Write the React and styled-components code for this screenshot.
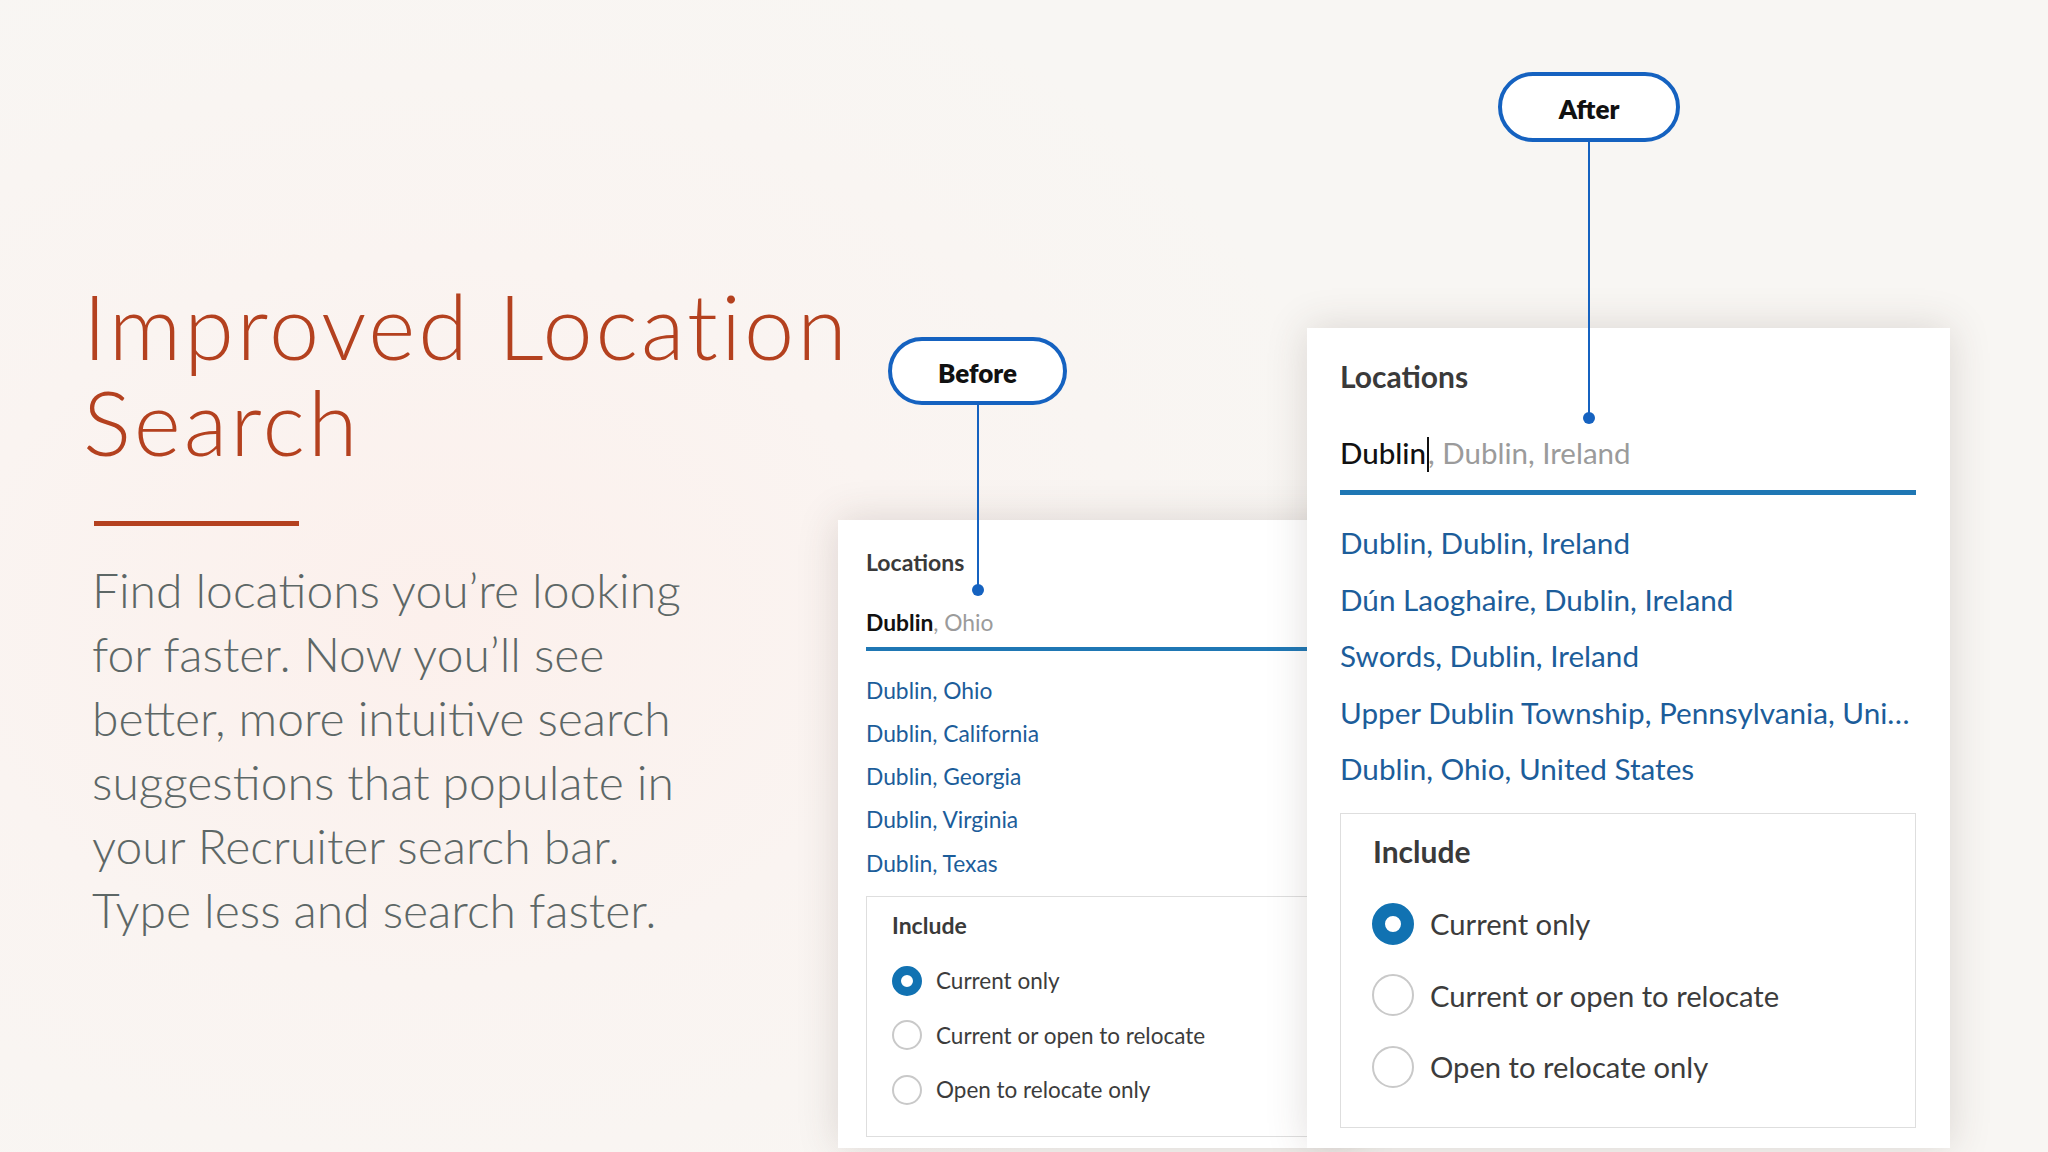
import React from 'react';
import styled, { createGlobalStyle, ThemeProvider } from 'styled-components';

const Global = createGlobalStyle`
  html, body { margin: 0; padding: 0; }
  body { width: 2048px; height: 1152px; overflow: hidden; background: #f8f6f3; }
  #root { width: 100%; height: 100%; }
`;

const large = {
  pad: '30px 34px 0 33px',
  label: 30, labelLh: 36,
  input: 29.5, inputLh: 44, inputGap: 37, inputPb: 15, line: 5,
  item: 29.7, itemLh: 56.5, listTop: 20,
  boxTop: 15, boxPad: '19px 20px 24px 31px', incLabelPl: 1, incLh: 36, rowsTop: 19.5,
  row: 71.5, radio: 42, ring: 13, radioGap: 16, rowFont: 29.2,
};
const small = {
  pad: '28px 0 0 28px',
  label: 23, labelLh: 28,
  input: 22.8, inputLh: 34, inputGap: 29, inputPb: 8, line: 4,
  item: 22.8, itemLh: 43.3, listTop: 17.5,
  boxTop: 11.5, boxPad: '14px 20px 19px 25px', incLabelPl: 0, incLh: 28, rowsTop: 14,
  row: 54.5, radio: 30, ring: 9, radioGap: 14, rowFont: 22.5,
};

const Slide = styled.main`
  position: relative;
  width: 2048px;
  height: 1152px;
  overflow: hidden;
  display: flex;
  background: radial-gradient(ellipse 950px 720px at 430px 620px, #fcf0ec 0%, #faf4f1 50%, #f8f6f3 100%);
  font-family: Lato, "Noto Sans", sans-serif;
`;

const Intro = styled.section`
  flex: none;
  width: 838px;
  box-sizing: border-box;
  padding: 277px 0 0 83px;
`;

const Title = styled.h1`
  margin: 0;
  font-family: Lato, sans-serif;
  font-weight: 300;
  font-size: 90px;
  line-height: 96px;
  letter-spacing: 3px;
  white-space: nowrap;
  color: #b4411f;
`;

const Rule = styled.div`
  width: 205px;
  height: 5px;
  margin: 52px 0 0 11px;
  background: #b4411f;
`;

const Lead = styled.p`
  margin: 32px 0 0 9px;
  font-family: Lato, sans-serif;
  font-weight: 300;
  font-size: 48px;
  line-height: 64px;
  white-space: nowrap;
  color: #5d6766;
`;

const Stage = styled.section`
  flex: 1;
  display: flex;
  align-items: flex-end;
  padding-bottom: 4px;
  box-sizing: border-box;
`;

const Panel = styled.div`
  position: relative;
  flex: none;
  box-sizing: border-box;
  width: ${p => p.$w}px;
  height: ${p => p.$h}px;
  margin-left: ${p => p.$offset || 0}px;
  padding: ${p => p.theme.pad};
  background: #fff;
  box-shadow: 0 0 38px rgba(70, 55, 50, 0.17);
  display: flex;
  flex-direction: column;
  overflow: hidden;
`;

const FieldLabel = styled.div`
  font-weight: 700;
  font-size: ${p => p.theme.label}px;
  line-height: ${p => p.theme.labelLh}px;
  color: #3a3a3a;
`;

const Input = styled.div`
  margin-top: ${p => p.theme.inputGap}px;
  padding-bottom: ${p => p.theme.inputPb}px;
  border-bottom: ${p => p.theme.line}px solid #1f77b4;
  font-size: ${p => p.theme.input}px;
  line-height: ${p => p.theme.inputLh}px;
  white-space: nowrap;
`;

const Typed = styled.span`
  color: #111;
  font-weight: ${p => (p.$bold ? 700 : 500)};
`;

const Hint = styled.span`
  color: #9b9b9b;
`;

const Caret = styled.span`
  display: inline-block;
  width: 2px;
  height: 1.2em;
  margin: 0 -1px 0 1px;
  vertical-align: -0.28em;
  background: #111;
`;

const Suggestions = styled.ul`
  list-style: none;
  margin: ${p => p.theme.listTop}px 0 0;
  padding: 0;
`;

const Suggestion = styled.li`
  font-size: ${p => p.theme.item}px;
  line-height: ${p => p.theme.itemLh}px;
  color: #1c5d9a;
  white-space: nowrap;
  overflow: hidden;
  text-overflow: ellipsis;
`;

const IncludeBox = styled.fieldset`
  margin: ${p => p.theme.boxTop}px 0 0;
  padding: ${p => p.theme.boxPad};
  border: 1px solid #dedede;
  min-width: 0;
`;

const IncludeLabel = styled.div`
  padding-left: ${p => p.theme.incLabelPl}px;
  font-weight: 700;
  font-size: ${p => p.theme.label}px;
  line-height: ${p => p.theme.incLh}px;
  color: #3a3a3a;
`;

const Options = styled.div`
  margin-top: ${p => p.theme.rowsTop}px;
  display: flex;
  flex-direction: column;
`;

const Option = styled.label`
  display: flex;
  align-items: center;
  gap: ${p => p.theme.radioGap}px;
  height: ${p => p.theme.row}px;
  font-size: ${p => p.theme.rowFont}px;
  color: #3c3c3c;
  white-space: nowrap;
`;

const Radio = styled.span`
  flex: none;
  box-sizing: border-box;
  width: ${p => p.theme.radio}px;
  height: ${p => p.theme.radio}px;
  border-radius: 50%;
  background: #fff;
  border: ${p => (p.$on ? `${p.theme.ring}px solid #1172b2` : '2px solid #c9c9c9')};
`;

const Callout = styled.div`
  position: absolute;
  left: ${p => p.$x}px;
  top: ${p => p.$y}px;
  z-index: 5;
  display: flex;
  flex-direction: column;
  align-items: center;
`;

const Pill = styled.div`
  box-sizing: border-box;
  width: ${p => p.$w}px;
  height: ${p => p.$h}px;
  border: 4px solid #1562c0;
  border-radius: 999px;
  background: #fff;
  display: flex;
  align-items: center;
  justify-content: center;
  font-family: Lato, sans-serif;
  font-weight: 800;
  font-size: 26px;
  color: #111;
  padding-top: 3px;
`;

const Stem = styled.div`
  width: 2px;
  height: ${p => p.$len}px;
  background: #1562c0;
`;

const Dot = styled.div`
  width: 12px;
  height: 12px;
  margin-top: -1px;
  border-radius: 50%;
  background: #1562c0;
`;

const beforeItems = ['Dublin, Ohio', 'Dublin, California', 'Dublin, Georgia', 'Dublin, Virginia', 'Dublin, Texas'];
const afterItems = [
  'Dublin, Dublin, Ireland',
  'Dún Laoghaire, Dublin, Ireland',
  'Swords, Dublin, Ireland',
  'Upper Dublin Township, Pennsylvania, United States',
  'Dublin, Ohio, United States',
];
const options = ['Current only', 'Current or open to relocate', 'Open to relocate only'];

function Include() {
  return (
    <IncludeBox>
      <IncludeLabel>Include</IncludeLabel>
      <Options>
        {options.map((o, i) => (
          <Option key={o}>
            <Radio $on={i === 0} />
            {o}
          </Option>
        ))}
      </Options>
    </IncludeBox>
  );
}

export default function App() {
  return (
    <>
      <Global />
      <Slide>
        <Intro>
          <Title>
            Improved Location
            <br />
            Search
          </Title>
          <Rule />
          <Lead>
            Find locations you’re looking
            <br />
            for faster. Now you’ll see
            <br />
            better, more intuitive search
            <br />
            suggestions that populate in
            <br />
            your Recruiter search bar.
            <br />
            Type less and search faster.
          </Lead>
        </Intro>
        <Stage>
          <ThemeProvider theme={small}>
            <Panel $w={520} $h={628}>
              <FieldLabel>Locations</FieldLabel>
              <Input>
                <Typed $bold>Dublin</Typed>
                <Hint>, Ohio</Hint>
              </Input>
              <Suggestions>
                {beforeItems.map(t => (
                  <Suggestion key={t}>{t}</Suggestion>
                ))}
              </Suggestions>
              <Include />
            </Panel>
          </ThemeProvider>
          <ThemeProvider theme={large}>
            <Panel $w={643} $h={820} $offset={-51}>
              <FieldLabel>Locations</FieldLabel>
              <Input>
                <Typed>Dublin</Typed>
                <Caret />
                <Hint>, Dublin, Ireland</Hint>
              </Input>
              <Suggestions>
                {afterItems.map(t => (
                  <Suggestion key={t}>{t}</Suggestion>
                ))}
              </Suggestions>
              <Include />
            </Panel>
          </ThemeProvider>
        </Stage>
        <Callout $x={888} $y={337}>
          <Pill $w={179} $h={68}>Before</Pill>
          <Stem $len={180} />
          <Dot />
        </Callout>
        <Callout $x={1498} $y={72}>
          <Pill $w={182} $h={70}>After</Pill>
          <Stem $len={271} />
          <Dot />
        </Callout>
      </Slide>
    </>
  );
}
